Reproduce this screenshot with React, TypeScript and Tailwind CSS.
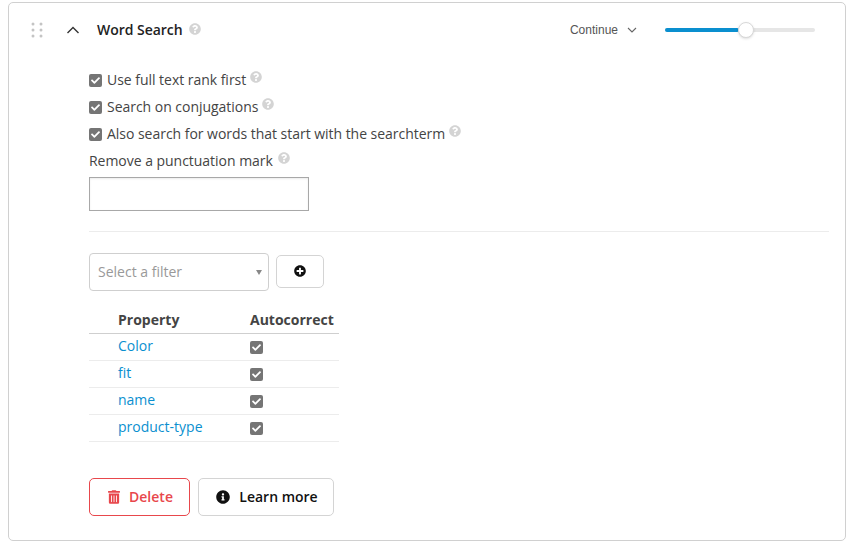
import React from "react";
import { FaQuestionCircle, FaPlusCircle, FaInfoCircle, FaTrashAlt, FaCheck } from "react-icons/fa";

function Help({ className = "" }: { className?: string }) {
  return <FaQuestionCircle className={`text-[#d4d4d4] w-[12px] h-[12px] shrink-0 ${className}`} />;
}

function Check() {
  return (
    <span className="w-[13px] h-[13px] bg-[#757575] rounded-[2px] flex items-center justify-center shrink-0">
      <FaCheck className="text-white w-[9px] h-[9px]" />
    </span>
  );
}

function Option({ label }: { label: string }) {
  return (
    <div className="flex items-center h-[27px]">
      <span className="mt-[1px]"><Check /></span>
      <span className="ml-[5px] text-[14px] tracking-[-0.03px] text-[#444]">{label}</span>
      <Help className="ml-[4px] -mt-[6px]" />
    </div>
  );
}

const rows = ["Color", "fit", "name", "product-type"];

export default function App() {
  return (
    <div className="w-[851px] h-[542px] bg-white font-['Open_Sans',sans-serif] pt-[2px] px-[8px] overflow-hidden">
      <div className="w-[838px] h-[539px] border border-[#d0d0d0] rounded-[5px] bg-white">
        <div className="flex items-center h-[54px] pl-[22px] pr-[30px]">
          <svg width="14" height="16" viewBox="0 0 14 16" className="shrink-0 fill-[#c4c4c4]">
            <circle cx="2" cy="2" r="1.5" /><circle cx="10" cy="2" r="1.5" />
            <circle cx="2" cy="8" r="1.5" /><circle cx="10" cy="8" r="1.5" />
            <circle cx="2" cy="14" r="1.5" /><circle cx="10" cy="14" r="1.5" />
          </svg>
          <svg width="14" height="8" viewBox="0 0 14 8" fill="none" stroke="#333" strokeWidth="1.4" className="ml-[21px] shrink-0">
            <path d="M1.5 7 7 1.5 12.5 7" />
          </svg>
          <span className="ml-[17px] -mt-[1px] text-[14px] tracking-[-0.03px] font-semibold text-[#222]">Word Search</span>
          <Help className="ml-[6px] -mt-[3px]" />
          <div className="ml-auto flex items-center">
            <span className="font-['Liberation_Sans',sans-serif] text-[12px] text-[#555]">Continue</span>
            <svg width="10" height="6" viewBox="0 0 10 6" fill="none" stroke="#666" strokeWidth="1.1" className="ml-[9px]">
              <path d="M1 1 5 5 9 1" />
            </svg>
            <div className="ml-[28px] w-[150px] h-[4px] bg-[#e6e6e6] rounded-full relative">
              <div className="h-full w-[74px] bg-[#0a8fcf] rounded-full" />
              <div className="absolute left-[73px] top-[-6px] w-[16px] h-[16px] rounded-full bg-white border border-[#d8d8d8] shadow-sm" />
            </div>
          </div>
        </div>

        <div className="pl-[80px] pr-[16px] pt-[9px]">
          <Option label="Use full text rank first" />
          <Option label="Search on conjugations" />
          <Option label="Also search for words that start with the searchterm" />
          <div className="flex items-center h-[27px]">
            <span className="text-[14px] tracking-[-0.03px] text-[#444]">Remove a punctuation mark</span>
            <Help className="ml-[5px] -mt-[6px]" />
          </div>
          <input className="block w-[220px] h-[34px] border border-[#a8a8a8] bg-white mt-[3px] shadow-[inset_0_1px_2px_rgba(0,0,0,0.08)]" />
          <div className="h-px bg-[#ececec] mt-[20px]" />

          <div className="flex items-center mt-[21px]">
            <div className="w-[180px] h-[38px] border border-[#cfcfcf] rounded-[4px] flex items-center pl-[8px] pr-[6px]">
              <span className="-mt-[2px] text-[14px] text-[#999]">Select a filter</span>
              <span className="ml-auto w-0 h-0 border-l-[3.5px] border-r-[3.5px] border-t-[5px] border-l-transparent border-r-transparent border-t-[#888]" />
            </div>
            <div className="ml-[7px] -mt-[2px] w-[48px] h-[33px] border border-[#d4d4d4] rounded-[5px] flex items-center justify-center">
              <FaPlusCircle className="w-[12px] h-[12px] text-[#111]" />
            </div>
          </div>

          <div className="w-[250px] mt-[14px]">
            <div className="flex items-center h-[29px] border-b border-[#cfcfcf] text-[14px] font-bold text-[#444]">
              <span className="ml-[29px] w-[132px]">Property</span>
              <span>Autocorrect</span>
            </div>
            {rows.map((r) => (
              <div key={r} className="flex items-center h-[27px] border-b border-[#ececec] text-[14px]">
                <span className="ml-[29px] w-[132px] -mt-[4px] text-[#0a8fcf]">{r}</span>
                <Check />
              </div>
            ))}
          </div>

          <div className="flex items-center mt-[36px]">
            <div className="w-[101px] h-[38px] border border-[#e8474c] rounded-[5px] flex items-center justify-center text-[14px] font-semibold text-[#e8474c]">
              <FaTrashAlt className="w-[12px] h-[14px] ml-[2px]" />
              <span className="ml-[9px] -mt-[2px]">Delete</span>
            </div>
            <div className="ml-[8px] w-[136px] h-[38px] border border-[#d4d4d4] rounded-[5px] flex items-center justify-center text-[14px] font-semibold text-[#111]">
              <FaInfoCircle className="w-[14px] h-[14px] ml-[2px]" />
              <span className="ml-[9px] -mt-[2px]">Learn more</span>
            </div>
          </div>
        </div>
      </div>
    </div>
  );
}
